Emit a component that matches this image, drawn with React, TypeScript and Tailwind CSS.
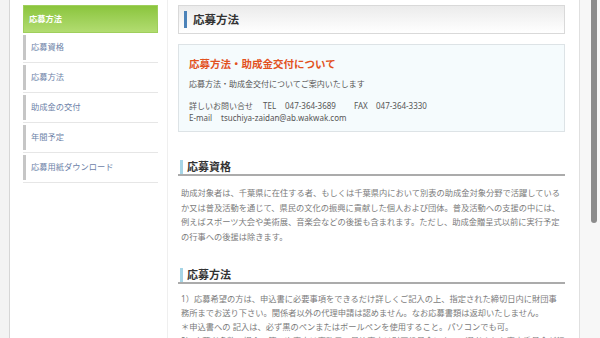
import React from "react";

const font = { fontFamily: "'Noto Sans', 'Noto Sans CJK JP', sans-serif" };

const navItems = ["応募資格", "応募方法", "助成金の交付", "年間予定", "応募用紙ダウンロード"];

function SectionHeading({ title, className }: { title: string; className?: string }) {
  return (
    <div className={`flex h-[17px] items-center border-b-2 border-[#ababab] ${className ?? ""}`}>
      <div className="ml-[2px] h-[14px] w-[3px] bg-[#a6d5e6]" />
      <div className="ml-[4px] text-[11px] font-bold leading-[14px] text-[#333]">{title}</div>
    </div>
  );
}

function Para({ lines, className }: { lines: string[]; className?: string }) {
  return (
    <div className={`pl-[3px] text-[8.25px] text-[#7b7b7b] ${className ?? ""}`}>
      {lines.map((l, i) => (
        <div key={i} className="whitespace-nowrap">
          {l}
        </div>
      ))}
    </div>
  );
}

export default function App() {
  return (
    <div className="flex h-[338px] w-[600px] overflow-hidden bg-[#f4f4f4]" style={font}>
      <div className="w-[10px] shrink-0 border-r border-[#d6d6d6] bg-[#f3f3f3]" />
      <div className="flex w-[570px] shrink-0 border-r border-[#e0e0e0] bg-white">
        {/* sidebar */}
        <div className="w-[148px] shrink-0 pl-[13px] pt-[5px]">
          <div className="flex h-[28px] items-center border border-[#9fcf5c] bg-gradient-to-b from-[#8bc53c] to-[#b2dc70] pl-[5px] text-[8.25px] font-bold text-white">
            応募方法
          </div>
          {navItems.map((t) => (
            <div key={t} className="border-b border-[#e6e6e6] py-[2px]">
              <div className="flex h-[25px] items-center border-l-[3px] border-[#c6c6c6] pl-[5px] text-[8.25px] text-[#6d82a8]">
                {t}
              </div>
            </div>
          ))}
        </div>
        {/* divider */}
        <div className="ml-[9px] w-px shrink-0 bg-[#efefef]" />
        {/* main */}
        <div className="ml-[10px] w-[387px] shrink-0 pt-[5px]">
          <div className="flex h-[29px] items-center border border-[#d9d9d9] bg-gradient-to-b from-[#ebebeb] to-[#ffffff]">
            <div className="ml-[5px] h-[17px] w-[3px] bg-[#4b82b8]" />
            <div className="ml-[6px] text-[11.5px] font-bold text-[#333]">応募方法</div>
          </div>

          <div className="mt-[10px] border border-[#dde3e6] bg-[#f5fbfd] px-[10px] pb-[7px] pt-[11px]">
            <div className="text-[10.5px] font-bold leading-[16px] text-[#e2521f]">
              応募方法・助成金交付について
            </div>
            <div className="mt-[6px] text-[8px] leading-[12px] text-[#555]">
              応募方法・助成金交付についてご案内いたします
            </div>
            <div className="mt-[10px] flex text-[8px] leading-[12px] text-[#555]">
              <span className="w-[74px]">詳しいお問い合せ</span>
              <span className="w-[22px]">TEL</span>
              <span className="w-[69px]">047-364-3689</span>
              <span className="w-[22px]">FAX</span>
              <span>047-364-3330</span>
            </div>
            <div className="flex text-[8px] leading-[12px] text-[#555]">
              <span className="w-[32px]">E-mail</span>
              <span>tsuchiya-zaidan@ab.wakwak.com</span>
            </div>
          </div>

          <SectionHeading title="応募資格" className="mt-[27px]" />
          <Para
            className="mt-[10px] leading-[14.5px]"
            lines={[
              "助成対象者は、千葉県に在住する者、もしくは千葉県内において別表の助成金対象分野で活躍している",
              "か又は普及活動を通じて、県民の文化の振興に貢献した個人および団体。普及活動への支援の中には、",
              "例えばスポーツ大会や美術展、音楽会などの後援も含まれます。ただし、助成金贈呈式以前に実行予定",
              "の行事への後援は除きます。",
            ]}
          />

          <SectionHeading title="応募方法" className="mt-[23px]" />
          <Para
            className="mt-[8px] leading-[14px]"
            lines={[
              "1）応募希望の方は、申込書に必要事項をできるだけ詳しくご記入の上、指定された締切日内に財団事",
              "務所までお送り下さい。関係者以外の代理申請は認めません。なお応募書類は返却いたしません。",
              "＊申込書への 記入は、必ず黒のペンまたはボールペンを使用すること。パソコンでも可。",
              "2）応募者多数の場合、第一次審査は事務局、最終審査は財団役員会によって選考された審査委員会が行",
            ]}
          />
        </div>
      </div>
      {/* right strip with scrollbar */}
      <div className="w-[20px] shrink-0 bg-[#f7f7f7] pl-[11px]">
        <div className="h-[223px] w-[6px] rounded-b-[3px] bg-[#8c8c8c]" />
      </div>
    </div>
  );
}
